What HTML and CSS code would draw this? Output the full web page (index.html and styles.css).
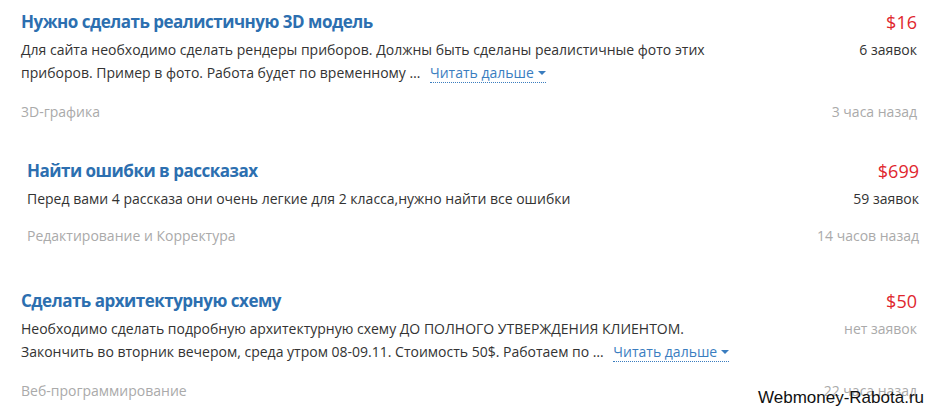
FILE: index.html
```html
<!doctype html>
<html lang="ru">
  <head>
    <meta charset="utf-8">
    <title>Заказы</title>
    <link rel="stylesheet" href="styles.css">
  </head>
  <body>
    <div id="feed">
      <div class="job">
        <a class="job-title" href="#">Нужно сделать реалистичную 3D модель</a>
        <div class="job-price">$16</div>
        <div class="job-desc">
          Для сайта необходимо сделать рендеры приборов. Должны быть сделаны реалистичные фото этих
          приборов. Пример в фото. Работа будет по временному …
          <a class="more" href="#">Читать дальше<span class="caret"></span></a>
        </div>
        <div class="job-bids">6 заявок</div>
        <div class="job-cat">3D-графика</div>
        <div class="job-time">3 часа назад</div>
      </div>

      <div class="job job-alt">
        <a class="job-title" href="#">Найти ошибки в рассказах</a>
        <div class="job-price">$699</div>
        <div class="job-desc">Перед вами 4 рассказа они очень легкие для 2 класса,нужно найти все ошибки</div>
        <div class="job-bids">59 заявок</div>
        <div class="job-cat">Редактирование и Корректура</div>
        <div class="job-time">14 часов назад</div>
      </div>

      <div class="job job-last">
        <a class="job-title" href="#">Сделать архитектурную схему</a>
        <div class="job-price">$50</div>
        <div class="job-desc">
          Необходимо сделать подробную архитектурную схему ДО ПОЛНОГО УТВЕРЖДЕНИЯ КЛИЕНТОМ.
          Закончить во вторник вечером, среда утром 08-09.11. Стоимость 50$. Работаем по …
          <a class="more" href="#">Читать дальше<span class="caret"></span></a>
        </div>
        <div class="job-bids none">нет заявок</div>
        <div class="job-cat">Веб-программирование</div>
        <div class="job-time">22 часа назад</div>
      </div>
    </div>
    <div id="watermark">Webmoney-Rabota.ru</div>
  </body>
</html>
```

FILE: styles.css
```css
body,
html {
  margin: 0;
  background-color: #fff;
  color: #333;
  font-family: "Open Sans", "Noto Sans", sans-serif;
}

#feed {
  padding: 10px 17px 0 21px;
}

.job {
  display: grid;
  grid-template-columns: 1fr auto;
  column-gap: 30px;
  margin-bottom: 37px;
}

.job-alt {
  margin: 0 -2px 43px 6px;
}

.job-last {
  margin-bottom: 0;
}

.job-title {
  font-size: 17px;
  font-weight: bold;
  line-height: 24px;
  color: #2c6fb0;
  text-decoration: none;
  letter-spacing: -0.5px;
}

.job-price {
  font-size: 18px;
  line-height: 24px;
  color: #e0262d;
  text-align: right;
}

.job-desc {
  max-width: 712px;
  margin-top: 4px;
  font-size: 14px;
  line-height: 23px;
  color: #333;
}

.job-bids {
  margin-top: 4px;
  font-size: 14px;
  line-height: 23px;
  text-align: right;
  white-space: nowrap;
}

.job-bids.none {
  color: #aaa;
}

.job-cat,
.job-time {
  margin-top: 18px;
  font-size: 14px;
  line-height: 20px;
  color: #aaa;
}

.job-alt .job-cat,
.job-alt .job-time {
  margin-top: 16px;
}

.job-time {
  text-align: right;
}

.more {
  margin-left: 6px;
  color: #3a7dbf;
  text-decoration: none;
  border-bottom: 1px dotted #3a7dbf;
}

.caret {
  display: inline-block;
  margin-left: 4px;
  vertical-align: 3px;
  border-left: 4px solid transparent;
  border-right: 4px solid transparent;
  border-top: 4px solid #3a7dbf;
}

#watermark {
  position: absolute;
  right: 10px;
  top: 388px;
  font-family: "Liberation Sans", Arial, sans-serif;
  font-size: 17px;
  color: #111;
}
```
